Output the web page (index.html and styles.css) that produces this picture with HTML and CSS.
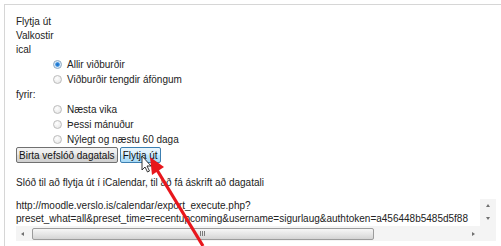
FILE: index.html
```html
<!DOCTYPE html>
<html lang="is">
<head>
  <meta charset="UTF-8" />
  <title>Flytja út dagatal</title>
  <link rel="stylesheet" href="styles.css">
</head>
<body>

<div class="frame">
  <div class="panel">
    <div class="line">Flytja út</div>
    <div class="line">Valkostir</div>
    <div class="line">ical</div>
    <div class="opts">
      <div class="opt"><span class="radio on"></span>Allir viðburðir</div>
      <div class="opt"><span class="radio"></span>Viðburðir tengdir áföngum</div>
    </div>
    <div class="opt-head">fyrir:</div>
    <div class="opts">
      <div class="opt"><span class="radio"></span>Næsta vika</div>
      <div class="opt"><span class="radio"></span>Þessi mánuður</div>
      <div class="opt"><span class="radio"></span>Nýlegt og næstu 60 daga</div>
    </div>
    <div class="btns">
      <button class="btn">Birta vefslóð dagatals</button>
      <button class="btn hover">Flytja út</button>
    </div>
    <div class="note">Slóð til að flytja út í iCalendar, til að fá áskrift að dagatali</div>

    <div class="urlbox">
      <div class="url-text">
        <div>http://moodle.verslo.is/calendar/export_execute.php?</div>
        <div>preset_what=all&amp;preset_time=recentupcoming&amp;username=sigurlaug&amp;authtoken=a456448b5485d5f88</div>
      </div>
      <div class="vscroll">
        <span class="tri up"></span>
        <span class="tri down"></span>
      </div>
      <div class="hscroll">
        <span class="tri left"></span>
        <div class="track"><div class="thumb"><span class="grip"></span></div></div>
        <span class="tri right"></span>
      </div>
      <div class="corner"></div>
    </div>
  </div>
</div>

<svg class="overlay" width="501" height="246" viewBox="0 0 501 246">
  <line x1="203" y1="246" x2="157" y2="170" stroke="#e8161c" stroke-width="3.2" />
  <polygon points="150,157 164,167 152,175" fill="#e8161c" />
  <polygon points="142,156 142,170 145,167 147.5,172 149.5,171 147,166 151,166" fill="#fff" stroke="#222" stroke-width="0.9" stroke-linejoin="round" />
</svg>

</body>
</html>
```

FILE: styles.css
```css
body {
  margin: 0;
  font-family: "Liberation Sans", Arial, sans-serif;
  font-size: 10px;
  color: #222;
  background: #fff;
  overflow: hidden;
}
.frame {
  margin: 4px 0 0 4px;
  border-top: 1px solid #d6d6d6;
  border-left: 1px solid #d6d6d6;
  height: 241px;
  overflow: hidden;
}
.panel {
  padding: 10px 0 0 11px;
}
.line {
  line-height: 14px;
}
.opt-head {
  line-height: 15px;
}
.opts {
  padding-left: 37px;
}
.opt {
  display: flex;
  align-items: center;
  height: 15px;
}
.radio {
  width: 7px;
  height: 7px;
  border-radius: 50%;
  border: 1px solid #bcbcbc;
  background: radial-gradient(circle at 40% 35%, #ffffff, #e2e2e2);
  margin-right: 5px;
}
.radio.on {
  border-color: #8aa6c0;
  background: radial-gradient(circle at 50% 50%, #1f6fc4 0, #2f8ae0 1.8px, #cfe4f7 2.6px, #eef5fb 4px);
}
.btns {
  display: flex;
  gap: 2px;
  height: 16px;
}
.btn {
  font-family: inherit;
  font-size: 10px;
  color: #111;
  height: 16px;
  padding: 0 2px;
  margin: 0;
  border: 1px solid #707070;
  border-radius: 2px;
  background: linear-gradient(#f3f3f3, #ebebeb 45%, #dddddd 50%, #cfcfcf);
  line-height: 13px;
}
.btn.hover {
  border-color: #3c7fb1;
  background: linear-gradient(#eaf6fd, #d9f0fc 45%, #bee6fd 50%, #a7d9f5);
}
.note {
  margin-top: 12px;
  line-height: 15px;
}
.urlbox {
  margin-top: 9px;
  width: 480px;
  display: grid;
  grid-template-columns: 464px 16px;
  grid-template-rows: 27px 15px;
}
.url-text {
  overflow: hidden;
  white-space: nowrap;
  line-height: 13px;
}
.vscroll {
  background: #f4f4f4;
  display: flex;
  flex-direction: column;
  align-items: center;
  justify-content: space-between;
  padding: 5px 0 6px;
}
.hscroll {
  background: #f4f4f4;
  display: flex;
  align-items: center;
  padding: 0 5px;
  gap: 5px;
}
.tri {
  width: 0;
  height: 0;
  border: 2px solid transparent;
}
.tri.up {
  border-bottom: 3px solid #707070;
  border-top: 0;
}
.tri.down {
  border-top: 3px solid #707070;
  border-bottom: 0;
}
.tri.left {
  border-right: 3px solid #707070;
  border-left: 0;
}
.tri.right {
  border-left: 3px solid #707070;
  border-right: 0;
}
.track {
  flex: 1;
  height: 13px;
  display: flex;
  align-items: center;
  padding-left: 3px;
}
.thumb {
  width: 342px;
  height: 12px;
  border: 1px solid #9c9c9c;
  border-radius: 2px;
  background: linear-gradient(#f6f6f6, #e6e6e6 50%, #d4d4d4);
  box-sizing: border-box;
  display: flex;
  align-items: center;
  justify-content: center;
}
.grip {
  width: 6px;
  height: 5px;
  background: repeating-linear-gradient(90deg, #7a7a7a 0, #7a7a7a 1px, transparent 1px, transparent 2px);
}
.corner {
  background: #f4f4f4;
}
.overlay {
  position: absolute;
  top: 0;
  left: 0;
  pointer-events: none;
}
```
